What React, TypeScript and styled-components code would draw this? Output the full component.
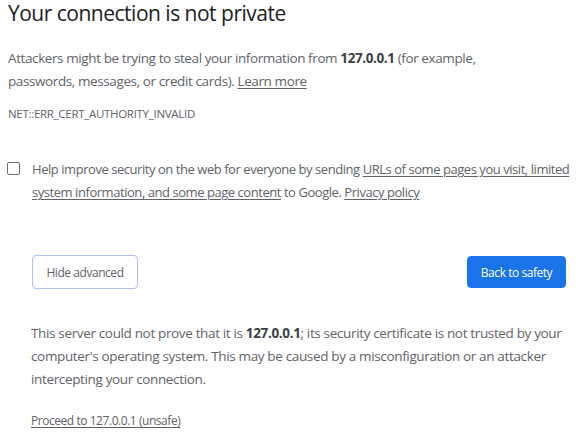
import React from 'react'
import styled, { createGlobalStyle } from 'styled-components'

const GlobalStyle = createGlobalStyle`
  html, body {
    margin: 0;
    padding: 0;
    background: #ffffff;
  }
  body {
    font-family: 'Open Sans', 'Noto Sans', sans-serif;
    -webkit-font-smoothing: antialiased;
  }
`

const Page = styled.div`
  width: 580px;
  height: 444px;
  box-sizing: border-box;
  padding: 0 2px 0 8px;
  color: #5f6368;
  overflow: hidden;
`

const Title = styled.h1`
  margin: 0;
  font-size: 21px;
  line-height: 28px;
  font-weight: 400;
  color: #202124;
  letter-spacing: -0.5px;
  margin-top: -1px;
`

const Paragraph = styled.p<{ indent?: boolean }>`
  margin: 0;
  font-size: 13.5px;
  line-height: 23px;
  letter-spacing: -0.4px;
  padding-left: ${({ indent }) => (indent ? '23px' : '0')};
`

const Intro = styled(Paragraph)`
  margin-top: 20px;
  max-width: 500px;
`

const Strong = styled.strong`
  font-weight: 700;
  color: #3c4043;
`

const Link = styled.a`
  color: #5f6368;
  text-decoration: underline;
  text-underline-offset: 2px;
  text-decoration-thickness: 1px;
`

const ErrorCode = styled.div`
  margin-top: 14px;
  font-size: 11.5px;
  line-height: 14px;
  letter-spacing: -0.3px;
  color: #5f6368;
`

const OptIn = styled.label`
  display: flex;
  align-items: flex-start;
  gap: 12px;
  margin-top: 37px;
  font-size: 13px;
  line-height: 23px;
  letter-spacing: -0.45px;
`

const Box = styled.span`
  flex: none;
  width: 11px;
  height: 11px;
  margin-top: 4px;
  margin-left: -1px;
  border: 1px solid #6b6f73;
  border-radius: 2px;
`

const OptInText = styled.span`
  flex: 1;
`

const Actions = styled.div`
  display: flex;
  justify-content: space-between;
  align-items: flex-start;
  margin-top: 51px;
  padding-left: 24px;
  padding-right: 12px;
`

const Button = styled.button<{ primary?: boolean }>`
  box-sizing: border-box;
  font-family: inherit;
  font-size: 12px;
  letter-spacing: -0.45px;
  border-radius: 4px;
  cursor: pointer;
  border: 1px solid ${({ primary }) => (primary ? '#1a73e8' : '#a9c3ec')};
  background: ${({ primary }) => (primary ? '#1a73e8' : '#ffffff')};
  color: ${({ primary }) => (primary ? '#ffffff' : '#5f6368')};
  height: ${({ primary }) => (primary ? '32px' : '34px')};
  width: ${({ primary }) => (primary ? '99px' : '106px')};
  margin-top: ${({ primary }) => (primary ? '1px' : '0')};
  padding: 0;
`

const Details = styled(Paragraph)`
  margin-top: 33px;
  max-width: 535px;
  letter-spacing: -0.35px;
`

const Proceed = styled.div`
  margin-top: 22px;
  padding-left: 23px;
  font-size: 12px;
  line-height: 16px;
  letter-spacing: -0.45px;
`

export default function App() {
  return (
    <>
      <GlobalStyle />
      <Page>
        <Title>Your connection is not private</Title>
        <Intro>
          Attackers might be trying to steal your information from <Strong>127.0.0.1</Strong> (for
          example, passwords, messages, or credit cards). <Link>Learn more</Link>
        </Intro>
        <ErrorCode>NET::ERR_CERT_AUTHORITY_INVALID</ErrorCode>
        <OptIn>
          <Box />
          <OptInText>
            Help improve security on the web for everyone by sending{' '}
            <Link>URLs of some pages you visit, limited system information, and some page content</Link>{' '}
            to Google. <Link>Privacy policy</Link>
          </OptInText>
        </OptIn>
        <Actions>
          <Button>Hide advanced</Button>
          <Button primary>Back to safety</Button>
        </Actions>
        <Details indent>
          This server could not prove that it is <Strong>127.0.0.1</Strong>; its security certificate
          is not trusted by your computer's operating system. This may be caused by a
          misconfiguration or an attacker intercepting your connection.
        </Details>
        <Proceed>
          <Link>Proceed to 127.0.0.1 (unsafe)</Link>
        </Proceed>
      </Page>
    </>
  )
}
